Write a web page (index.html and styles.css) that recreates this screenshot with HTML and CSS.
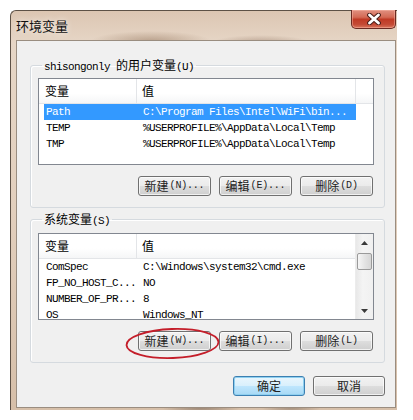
FILE: index.html
```html
<!DOCTYPE html>
<html>
<head>
<meta charset="utf-8">
<link rel="stylesheet" href="styles.css">
</head>
<body>
<div class="win">
  <div class="titlebar">
    <div class="title">环境变量</div>
    <div class="close">
      <svg width="16" height="12" viewBox="0 0 16 12">
        <path d="M3.5 2 L12.5 10 M12.5 2 L3.5 10" stroke="#4a1e18" stroke-width="4.8" stroke-linecap="round"/>
        <path d="M3.5 2 L12.5 10 M12.5 2 L3.5 10" stroke="#ffffff" stroke-width="2.8" stroke-linecap="round"/>
      </svg>
    </div>
  </div>
  <div class="client">
    <fieldset class="group g1">
      <legend><span class="mono">shisongonly </span>的用户变量<span class="mono">(U)</span></legend>
      <div class="list">
        <div class="lmain">
          <div class="lhead"><div class="hc c1">变量</div><div class="hc c2">值</div><div class="hc c3"></div></div>
          <div class="row sel"><div class="rc">Path</div><div class="rc v">C:\Program Files\Intel\WiFi\bin...</div></div>
          <div class="row"><div class="rc">TEMP</div><div class="rc v">%USERPROFILE%\AppData\Local\Temp</div></div>
          <div class="row"><div class="rc">TMP</div><div class="rc v">%USERPROFILE%\AppData\Local\Temp</div></div>
        </div>
      </div>
      <div class="btns">
        <button class="btn">新建<span class="mono">(N)...</span></button>
        <button class="btn">编辑<span class="mono">(E)...</span></button>
        <button class="btn">删除<span class="mono">(D)</span></button>
      </div>
    </fieldset>
    <fieldset class="group g2">
      <legend>系统变量<span class="mono">(S)</span></legend>
      <div class="list l2">
        <div class="lmain">
          <div class="lhead"><div class="hc c1">变量</div><div class="hc c2b">值</div></div>
          <div class="row"><div class="rc">ComSpec</div><div class="rc v">C:\Windows\system32\cmd.exe</div></div>
          <div class="row"><div class="rc">FP_NO_HOST_C...</div><div class="rc v">NO</div></div>
          <div class="row"><div class="rc">NUMBER_OF_PR...</div><div class="rc v">8</div></div>
          <div class="row"><div class="rc">OS</div><div class="rc v">Windows_NT</div></div>
        </div>
        <div class="sbar">
          <div class="sbtn"><svg width="7" height="4" viewBox="0 0 7 4"><path d="M0 4 L3.5 0 L7 4 Z" fill="#3a3a3a"/></svg></div>
          <div class="thumb"></div>
          <div class="strack"></div>
          <div class="sbtn"><svg width="7" height="4" viewBox="0 0 7 4"><path d="M0 0 L3.5 4 L7 0 Z" fill="#3a3a3a"/></svg></div>
        </div>
      </div>
      <div class="btns">
        <button class="btn">新建<span class="mono">(W)...</span></button>
        <button class="btn">编辑<span class="mono">(I)...</span></button>
        <button class="btn">删除<span class="mono">(L)</span></button>
      </div>
    </fieldset>
    <div class="okrow">
      <button class="btn focus">确定</button>
      <button class="btn">取消</button>
    </div>
    <svg class="circle" width="97" height="35" viewBox="0 0 97 35">
      <ellipse cx="48.5" cy="17.5" rx="46" ry="14.5" fill="none" stroke="#c41e2a" stroke-width="1.8" transform="rotate(-2 48.5 17.5)"/>
    </svg>
  </div>
</div>
</body>
</html>
```
FILE: styles.css
```css
html, body {
  margin: 0;
  padding: 0;
  background: #ffffff;
}
body {
  font-family: "Noto Sans CJK SC", "Liberation Sans", sans-serif;
  font-size: 12px;
  color: #000;
}
.mono {
  font-family: "Liberation Mono", "Noto Sans CJK SC", monospace;
  font-size: 11px;
  letter-spacing: -0.6px;
}
.win {
  margin: 10px 0 0 10px;
  width: 387px;
  height: 400px;
  box-sizing: border-box;
  border-top: 1px solid #5d5146;
  border-left: 1px solid #5d5146;
  border-radius: 6px 0 0 0;
  padding: 0 1px 2px 5px;
  display: flex;
  flex-direction: column;
  background:
    radial-gradient(ellipse 60px 10px at 140px 30px, rgba(150,120,95,0.55), rgba(150,120,95,0)),
    radial-gradient(ellipse 50px 8px at 250px 32px, rgba(140,110,90,0.5), rgba(140,110,90,0)),
    radial-gradient(ellipse 40px 8px at 190px 396px, rgba(110,90,75,0.6), rgba(110,90,75,0)),
    radial-gradient(ellipse 30px 8px at 280px 396px, rgba(110,90,75,0.5), rgba(110,90,75,0)),
    linear-gradient(to bottom, #dcc6b2 0%, #e6d6c6 8%, #e2cfbd 50%, #d6bfa9 100%);
}
.titlebar {
  height: 29px;
  display: flex;
  justify-content: space-between;
  align-items: flex-start;
}
.title {
  padding-top: 6px;
  font-size: 13px;
  line-height: 17px;
  color: #111;
  text-shadow: 0 0 6px rgba(255,255,255,0.9);
}
.close {
  margin-top: -1px;
  width: 45px;
  height: 19px;
  box-sizing: border-box;
  border: 1px solid #6a2a22;
  border-top: none;
  border-radius: 0 0 5px 5px;
  background: linear-gradient(to bottom, #e09080 0%, #d46a55 40%, #c03a25 52%, #c44a35 80%, #d8755c 100%);
  display: flex;
  align-items: center;
  justify-content: center;
  box-shadow: inset 0 0 0 1px rgba(255,190,175,0.45);
}
.client {
  flex: 1;
  box-sizing: border-box;
  background: #f0f0f0;
  border: 1px solid #9a8d80;
  padding: 17px 10px 0 13px;
  position: relative;
  display: flex;
  flex-direction: column;
}
.group {
  margin: 0;
  padding: 0 11px 11px 7px;
  border: 1px solid #d5dadf;
  border-radius: 3px;
  box-shadow: 1px 1px 0 #ffffff inset;
  width: 355px;
  box-sizing: border-box;
  min-width: 0;
}
.g2 { margin-top: 4px; }
.group legend {
  margin-left: 4px;
  padding: 0 2px;
  line-height: 14px;
  height: 14px;
  font-size: 12px;
}
.group legend .mono { font-size: 11px; }
.list {
  margin-top: 6px;
  width: 336px;
  height: 87px;
  box-sizing: border-box;
  border: 1px solid #828790;
  background: #fff;
  overflow: hidden;
  display: flex;
}
.l2 { margin-top: 7px; }
.lmain {
  flex: 1;
  min-width: 0;
}
.lhead {
  display: flex;
  height: 25px;
  box-sizing: border-box;
  background: linear-gradient(to bottom, #ffffff 0%, #ffffff 60%, #f5f6f7 100%);
  border-bottom: 1px solid #e3e5e8;
}
.hc {
  box-sizing: border-box;
  border-right: 1px solid #e3e5e8;
  line-height: 24px;
  font-size: 12px;
}
.c1 { width: 98px; padding-left: 6px; }
.c2 { width: 219px; padding-left: 5px; }
.c2b { flex: 1; padding-left: 5px; border-right: none; }
.c3 { flex: 1; border-right: none; }
.row {
  display: flex;
  height: 16px;
  margin-left: 5px;
  width: 312px;
  font-family: "Liberation Mono", monospace;
  font-size: 11px;
  letter-spacing: -0.6px;
  line-height: 16px;
  color: #000;
  white-space: nowrap;
}
.rc { width: 93px; padding-left: 2px; box-sizing: border-box; overflow: hidden; }
.rc.v { width: auto; flex: 1; padding-left: 6px; }
.row.sel {
  background: #3399ff;
  color: #ffffff;
}
.sbar {
  width: 17px;
  display: flex;
  flex-direction: column;
  background: linear-gradient(to right, #e8e8e8, #f4f4f4 40%, #f0f0f0);
  border-left: 1px solid #ececec;
}
.sbtn {
  height: 17px;
  display: flex;
  align-items: center;
  justify-content: center;
}
.thumb {
  margin: 2px 1px 0 1px;
  height: 15px;
  border: 1px solid #9a9a9a;
  border-radius: 2px;
  background: linear-gradient(to right, #f6f6f6, #e4e4e4 50%, #d6d6d6);
}
.strack { flex: 1; }
.btns {
  margin-top: 11px;
  display: flex;
  justify-content: flex-end;
  gap: 8px;
}
.btn {
  width: 73px;
  height: 20px;
  box-sizing: border-box;
  padding: 0;
  margin: 0;
  border: 1px solid #707070;
  border-radius: 3px;
  background: linear-gradient(to bottom, #f2f2f2 0%, #ebebeb 48%, #dddddd 52%, #cfcfcf 100%);
  box-shadow: inset 0 0 0 1px rgba(255,255,255,0.7);
  font-family: "Noto Sans CJK SC", sans-serif;
  font-size: 12px;
  line-height: 18px;
  color: #222;
  display: flex;
  align-items: center;
  justify-content: center;
}
.btn .mono { font-size: 10px; letter-spacing: -0.2px; margin-left: 1px; }
.btn.focus {
  border-color: #3c7fb1;
  background: linear-gradient(to bottom, #eaf6fd 0%, #d9f0fc 48%, #bee6fd 52%, #a7d9f5 100%);
  box-shadow: inset 0 0 0 1px #8fd0f0;
}
.okrow {
  margin-top: 13px;
  width: 355px;
  display: flex;
  justify-content: flex-end;
  gap: 8px;
}
.okrow .btn { width: 72px; }
.circle {
  position: absolute;
  left: 107px;
  top: 285px;
}
```
